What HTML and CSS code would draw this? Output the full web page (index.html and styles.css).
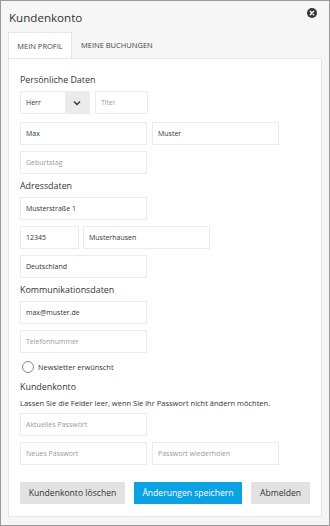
FILE: index.html
```html
<!DOCTYPE html>
<html lang="de">
<head>
<meta charset="utf-8">
<link rel="stylesheet" href="styles.css">
</head>
<body>
<div class="modal">
  <div class="header">
    <h1 class="title">Kundenkonto</h1>
    <span class="close" aria-label="Schließen">
      <svg width="10" height="10" viewBox="0 0 10 10"><circle cx="5" cy="5" r="5" fill="#333"/><path d="M3.3 3.3L6.7 6.7M6.7 3.3L3.3 6.7" stroke="#fff" stroke-width="1.4" stroke-linecap="round"/></svg>
    </span>
  </div>
  <div class="tabs">
    <div class="tab active">MEIN PROFIL</div>
    <div class="tab">MEINE BUCHUNGEN</div>
  </div>
  <div class="panel">
    <div class="section-title first">Persönliche Daten</div>
    <div class="group">
      <div class="row row-first">
        <div class="select"><span class="select-value">Herr</span><span class="select-arrow"><svg width="8" height="6" viewBox="0 0 8 6"><path d="M1 1.5L4 4.5L7 1.5" fill="none" stroke="#333" stroke-width="1.4"/></svg></span></div>
        <div class="input w-title placeholder">Titel</div>
      </div>
      <div class="row">
        <div class="input">Max</div>
        <div class="input">Muster</div>
      </div>
      <div class="row">
        <div class="input placeholder">Geburtstag</div>
      </div>
    </div>
    <div class="section-title">Adressdaten</div>
    <div class="group">
      <div class="row"><div class="input">Musterstraße 1</div></div>
      <div class="row">
        <div class="input w-zip">12345</div>
        <div class="input">Musterhausen</div>
      </div>
      <div class="row"><div class="input">Deutschland</div></div>
    </div>
    <div class="section-title">Kommunikationsdaten</div>
    <div class="group">
      <div class="row"><div class="input">max@muster.de</div></div>
      <div class="row"><div class="input placeholder">Telefonnummer</div></div>
    </div>
    <label class="check"><span class="radio"></span>Newsletter erwünscht</label>
    <div class="section-title tight">Kundenkonto</div>
    <p class="hint">Lassen Sie die Felder leer, wenn Sie ihr Passwort nicht ändern möchten.</p>
    <div class="group">
      <div class="row"><div class="input placeholder">Aktuelles Passwort</div></div>
      <div class="row">
        <div class="input placeholder">Neues Passwort</div>
        <div class="input placeholder">Passwort wiederholen</div>
      </div>
    </div>
    <div class="actions">
      <button class="btn grey w1">Kundenkonto löschen</button>
      <button class="btn blue w2">Änderungen speichern</button>
      <button class="btn grey w3">Abmelden</button>
    </div>
  </div>
</div>
</body>
</html>
```
FILE: styles.css
```css
* { box-sizing: border-box; }
html, body { margin: 0; padding: 0; }
body {
  width: 330px;
  height: 526px;
  font-family: "Open Sans", "Liberation Sans", sans-serif;
  color: #333;
  background: #fff;
}
.modal {
  width: 330px;
  height: 526px;
  background: #f6f6f6;
  border: 1px solid #9a9a9a;
  padding: 0 7px 0 7px;
}
.header {
  height: 31px;
  display: flex;
  align-items: center;
  justify-content: space-between;
}
.title {
  margin: 0 0 0 1px;
  font-size: 11.6px;
  font-weight: 400;
  color: #333;
  line-height: 16px;
  padding-top: 2px;
}
.close { display: flex; margin-right: 5px; margin-top: -7px; }
.tabs {
  display: flex;
  height: 26px;
  align-items: stretch;
}
.tab {
  font-size: 7.5px;
  color: #444;
  display: flex;
  align-items: center;
  padding: 0 9px;
}
.tab.active {
  background: #fff;
  border: 1px solid #e6e6e6;
  border-bottom: none;
  width: 64px;
  justify-content: center;
  padding: 0;
}
.panel {
  background: #fff;
  border: 1px solid #e6e6e6;
  height: 459px;
  padding: 9px 0 0 11px;
}
.section-title {
  font-size: 8.9px;
  line-height: 16px;
  margin: 4px 0 3px;
  color: #333;
}
.section-title.tight { margin-top: 3px; margin-bottom: 1px; }
.group { display: flex; flex-direction: column; gap: 6px; }
.row { display: flex; gap: 5px; height: 23px; }
.row-first { margin-bottom: 2px; }
.input {
  width: 127px;
  height: 23px;
  border: 1px solid #ececec;
  font-size: 7px;
  display: flex;
  align-items: center;
  padding-left: 5px;
  color: #333;
  background: #fff;
}
.input.placeholder { color: #9a9a9a; }
.input.w-title { width: 53px; }
.input.w-zip { width: 59px; margin-right: -1px; }
.select {
  width: 70px;
  height: 23px;
  border: 1px solid #ececec;
  display: flex;
  font-size: 7px;
}
.select-value { flex: 1; display: flex; align-items: center; padding-left: 5px; }
.select-arrow {
  width: 24px;
  background: #ebebeb;
  display: flex;
  align-items: center;
  justify-content: center;
}
.check {
  display: flex;
  align-items: center;
  height: 18px;
  margin-top: 5px;
  font-size: 7.4px;
  color: #333;
  padding-left: 2px;
}
.radio {
  width: 12px;
  height: 12px;
  border: 1px solid #888;
  border-radius: 50%;
  margin-right: 4px;
  background: #fff;
}
.hint {
  margin: 0 0 3px;
  font-size: 7.5px;
  line-height: 14px;
  color: #333;
}
.actions { display: flex; gap: 9px; margin-top: 17px; }
.btn {
  height: 22px;
  border: none;
  font-family: inherit;
  font-size: 8.6px;
  padding: 0;
  display: flex;
  align-items: center;
  justify-content: center;
}
.btn.grey { background: #e2e2e2; color: #333; }
.btn.blue { background: #0aa2e2; color: #fff; }
.w1 { width: 105px; }
.w2 { width: 108px; }
.w3 { width: 59px; }
```
